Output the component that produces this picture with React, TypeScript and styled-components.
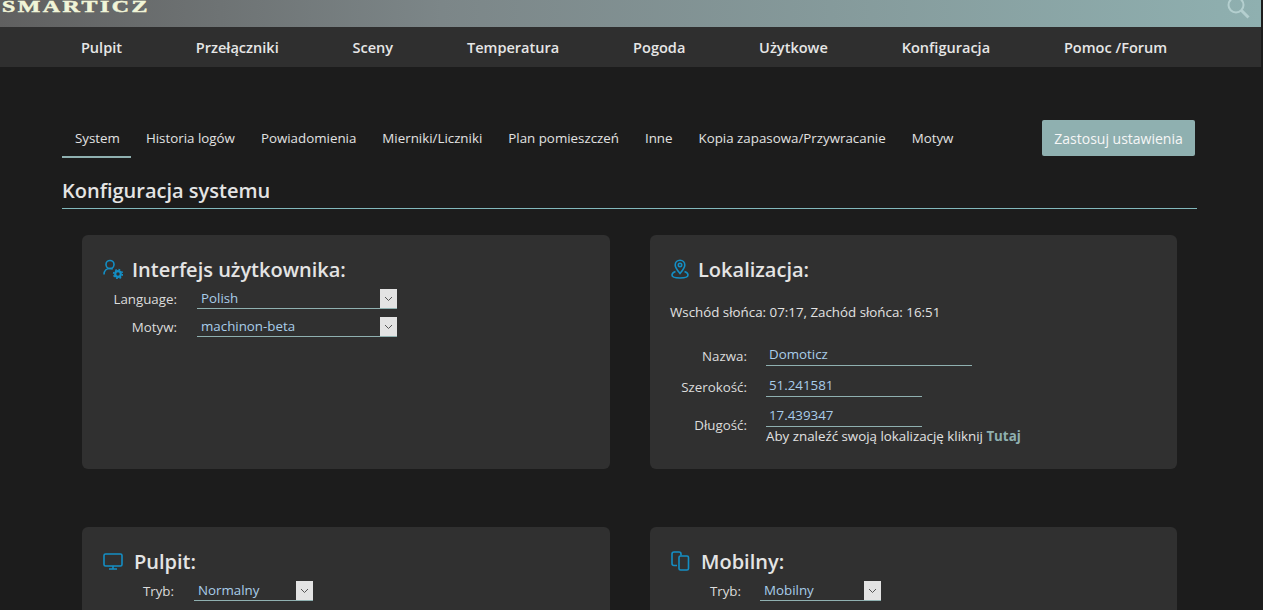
import React from 'react';
import styled, { createGlobalStyle } from 'styled-components';

const GlobalStyle = createGlobalStyle`
    html, body {
        margin: 0;
        padding: 0;
        height: 100%;
        overflow: hidden;
        background: #1c1c1c;
    }
    body {
        font-family: "Open Sans", "Liberation Sans", sans-serif;
        font-size: 13.33px;
        color: #e4e4e4;
    }
`;

const Page = styled.div`
    width: 1261px;
    height: 610px;
    overflow: hidden;
`;

// Top bar with logo and search
const TopBar = styled.div`
    height: 27px;
    overflow: hidden;
    display: flex;
    justify-content: space-between;
    background: linear-gradient(to right, #606060 0%, #7c8688 35%, #8fb0b0 100%);
`;

const Logo = styled.div`
    font-family: "Liberation Serif", serif;
    font-weight: bold;
    font-size: 16px;
    line-height: 13px;
    letter-spacing: 1.7px;
    color: #f1f5d8;
    -webkit-text-stroke: 0.5px #f1f5d8;
    transform: scaleX(1.49);
    transform-origin: left top;
    margin-left: 2px;
    white-space: nowrap;
`;

const SearchIcon = styled.svg`
    width: 26px;
    height: 26px;
    margin: -5px 10px 0 0;
    stroke: #b4cfcf;
    fill: none;
`;

const Nav = styled.nav`
    height: 40px;
    padding-left: 44px;
    display: flex;
    align-items: center;
    background: #2f2f2f;
`;

const NavItem = styled.div`
    padding: 0 36.9px;
    font-size: 14.55px;
    font-weight: 600;
    color: #e6e6e6;
    white-space: nowrap;
`;

const Content = styled.main`
    width: 1135px;
    margin: 53px 0 0 62px;
`;

const TabBar = styled.div`
    display: flex;
    align-items: flex-end;
    justify-content: space-between;
    height: 38px;
    padding-right: 2px;
`;

const Tabs = styled.div`
    display: flex;
`;

const Tab = styled.div<{ $active?: boolean }>`
    height: 38px;
    line-height: 37px;
    padding: 0 ${(p) => (p.$active ? '11.5px' : '13px')} 0 13px;
    margin-right: ${(p) => (p.$active ? '1.5px' : '0')};
    box-sizing: border-box;
    white-space: nowrap;
    color: #e2e2e2;
    border-bottom: 2px solid ${(p) => (p.$active ? '#8fb0b0' : 'transparent')};
`;

const ApplyButton = styled.button`
    width: 153px;
    height: 36px;
    align-self: flex-start;
    border: 0;
    border-radius: 2px;
    background: #8fb0b0;
    color: #f6f6f6;
    font-family: inherit;
    font-size: 14px;
`;

const PageTitle = styled.h2`
    margin: 22px 0 0;
    height: 28px;
    line-height: 21px;
    font-size: 20px;
    font-weight: 600;
    color: #e4e4e4;
    border-bottom: 1px solid #82b8bc;
`;

const CardGrid = styled.div`
    display: grid;
    grid-template-columns: 528px 527px;
    column-gap: 40px;
    row-gap: 58px;
    padding: 26px 20px 0;
`;

const Card = styled.section`
    height: 234px;
    box-sizing: border-box;
    padding: 20px 20px 0;
    border-radius: 6px;
    background: #303030;
`;

const CardTitle = styled.h3<{ $gap: number }>`
    display: flex;
    align-items: center;
    gap: ${(p) => p.$gap}px;
    height: 28px;
    margin: 0 0 2px;
    padding-left: 1px;
    font-size: 20px;
    font-weight: 600;
    color: #e4e4e4;
`;

const CardIcon = styled.svg`
    flex: none;
    stroke: #148ec4;
    fill: none;
    stroke-width: 1.6;
`;

const FormRow = styled.div<{ $labelWidth: number; $height?: number; $gap?: number }>`
    display: grid;
    grid-template-columns: ${(p) => p.$labelWidth}px auto;
    column-gap: ${(p) => p.$gap ?? 20}px;
    justify-content: start;
    align-items: center;
    height: ${(p) => p.$height ?? 28}px;
`;

const Label = styled.div<{ $drop?: number }>`
    transform: translateY(${(p) => p.$drop ?? 0}px);
    text-align: right;
    color: #dcdcdc;
`;

const SelectBox = styled.div<{ $width: number }>`
    position: relative;
    width: ${(p) => p.$width}px;
    height: 20px;
    box-sizing: border-box;
    padding-left: 4px;
    line-height: 19px;
    color: #a9cdea;
    border-bottom: 1px solid #8fb0b0;
`;

const Chevron = styled.div`
    position: absolute;
    right: 0;
    top: 0;
    width: 17px;
    height: 20px;
    display: flex;
    align-items: center;
    justify-content: center;
    background: #e3e3e3;
    border-bottom: 1px solid #8fb0b0;
    box-sizing: border-box;
    svg {
        width: 9px;
        height: 6px;
        stroke: #555;
        fill: none;
    }
`;

const SunInfo = styled.div`
    margin-top: 20px;
    height: 36px;
    line-height: 18px;
    color: #e2e2e2;
`;

const TextInput = styled.div<{ $width: number }>`
    width: ${(p) => p.$width}px;
    height: 23px;
    box-sizing: border-box;
    padding-left: 3px;
    line-height: 22px;
    color: #a9cdea;
    border-bottom: 1px solid #8fb0b0;
`;

const Help = styled.div`
    margin: -3px 0 0 96px;
    line-height: 18px;
    color: #e2e2e2;
    b {
        color: #8fb0b0;
        font-weight: 700;
    }
`;

const navItems = ['Pulpit', 'Przełączniki', 'Sceny', 'Temperatura', 'Pogoda', 'Użytkowe', 'Konfiguracja', 'Pomoc /Forum'];
const tabs = ['System', 'Historia logów', 'Powiadomienia', 'Mierniki/Liczniki', 'Plan pomieszczeń', 'Inne', 'Kopia zapasowa/Przywracanie', 'Motyw'];

const Select = ({ value, width }: { value: string; width: number }) => (
    <SelectBox $width={width}>
        {value}
        <Chevron>
            <svg viewBox="0 0 9 6">
                <path d="M1 1l3.5 3.5L8 1" />
            </svg>
        </Chevron>
    </SelectBox>
);

const App = () => {
    return (
        <Page>
            <GlobalStyle />
            <TopBar>
                <Logo>SMARTICZ</Logo>
                <SearchIcon viewBox="0 0 26 26">
                    <circle cx="11" cy="10" r="7.5" strokeWidth="2" />
                    <path d="M16.5 15.5l7 7" strokeWidth="3" />
                </SearchIcon>
            </TopBar>
            <Nav>
                {navItems.map((item) => (
                    <NavItem key={item}>{item}</NavItem>
                ))}
            </Nav>
            <Content>
                <TabBar>
                    <Tabs>
                        {tabs.map((tab, i) => (
                            <Tab key={tab} $active={i === 0}>{tab}</Tab>
                        ))}
                    </Tabs>
                    <ApplyButton>Zastosuj ustawienia</ApplyButton>
                </TabBar>
                <PageTitle>Konfiguracja systemu</PageTitle>
                <CardGrid>
                    <Card>
                        <CardTitle $gap={9}>
                            <CardIcon width="20" height="20" viewBox="0 0 20 20">
                                <circle cx="7" cy="5.5" r="4" />
                                <path d="M1 15.500c0-3.500 2.500-6 6-6 1 0 2 .2 2.800.6" />
                                <circle cx="15" cy="15" r="2.800" strokeWidth="2.200" />
                                <circle cx="15" cy="15" r="4.400" strokeWidth="1.600" strokeDasharray="1.700 1.750" />
                            </CardIcon>
                            Interfejs użytkownika:
                        </CardTitle>
                        <FormRow $labelWidth={75}>
                            <Label>Language:</Label>
                            <Select value="Polish" width={200} />
                        </FormRow>
                        <FormRow $labelWidth={75}>
                            <Label>Motyw:</Label>
                            <Select value="machinon-beta" width={200} />
                        </FormRow>
                    </Card>
                    <Card>
                        <CardTitle $gap={9}>
                            <CardIcon width="18" height="20" viewBox="0 0 18 20">
                                <path d="M9 14.500C6.500 11.500 4.200 9 4.200 6a4.800 4.800 0 0 1 9.600 0c0 3-2.300 5.500-4.800 8.500z" />
                                <circle cx="9" cy="6" r="1.700" />
                                <path d="M4.500 12.500C2.500 13.300 1 14.500 1 16c0 1.800 3.600 3 8 3s8-1.200 8-3c0-1.500-1.500-2.700-3.500-3.500" />
                            </CardIcon>
                            Lokalizacja:
                        </CardTitle>
                        <SunInfo>Wschód słońca: 07:17, Zachód słońca: 16:51</SunInfo>
                        <FormRow $labelWidth={77} $height={31} $gap={19}>
                            <Label $drop={1}>Nazwa:</Label>
                            <TextInput $width={206}>Domoticz</TextInput>
                        </FormRow>
                        <FormRow $labelWidth={77} $height={30} $gap={19}>
                            <Label $drop={2}>Szerokość:</Label>
                            <TextInput $width={156}>51.241581</TextInput>
                        </FormRow>
                        <FormRow $labelWidth={77} $height={30} $gap={19}>
                            <Label $drop={10}>Długość:</Label>
                            <TextInput $width={156}>17.439347</TextInput>
                        </FormRow>
                        <Help>Aby znaleźć swoją lokalizację kliknij <b>Tutaj</b></Help>
                    </Card>
                    <Card>
                        <CardTitle $gap={11}>
                            <CardIcon width="20" height="17" viewBox="0 0 20 17">
                                <rect x="1" y="1" width="18" height="12" rx="1.500" />
                                <path d="M10 13v2.500M6 16h8" />
                            </CardIcon>
                            Pulpit:
                        </CardTitle>
                        <FormRow $labelWidth={72}>
                            <Label>Tryb:</Label>
                            <Select value="Normalny" width={119} />
                        </FormRow>
                    </Card>
                    <Card>
                        <CardTitle $gap={11}>
                            <CardIcon width="19" height="20" viewBox="0 0 19 20">
                                <path d="M6 14.500H3a2 2 0 0 1-2-2V3a2 2 0 0 1 2-2h5a2 2 0 0 1 2 2v1.500" />
                                <rect x="8" y="5" width="9.500" height="14" rx="1.500" />
                            </CardIcon>
                            Mobilny:
                        </CardTitle>
                        <FormRow $labelWidth={71} $gap={19}>
                            <Label>Tryb:</Label>
                            <Select value="Mobilny" width={121} />
                        </FormRow>
                    </Card>
                </CardGrid>
            </Content>
        </Page>
    );
};

export default App;
